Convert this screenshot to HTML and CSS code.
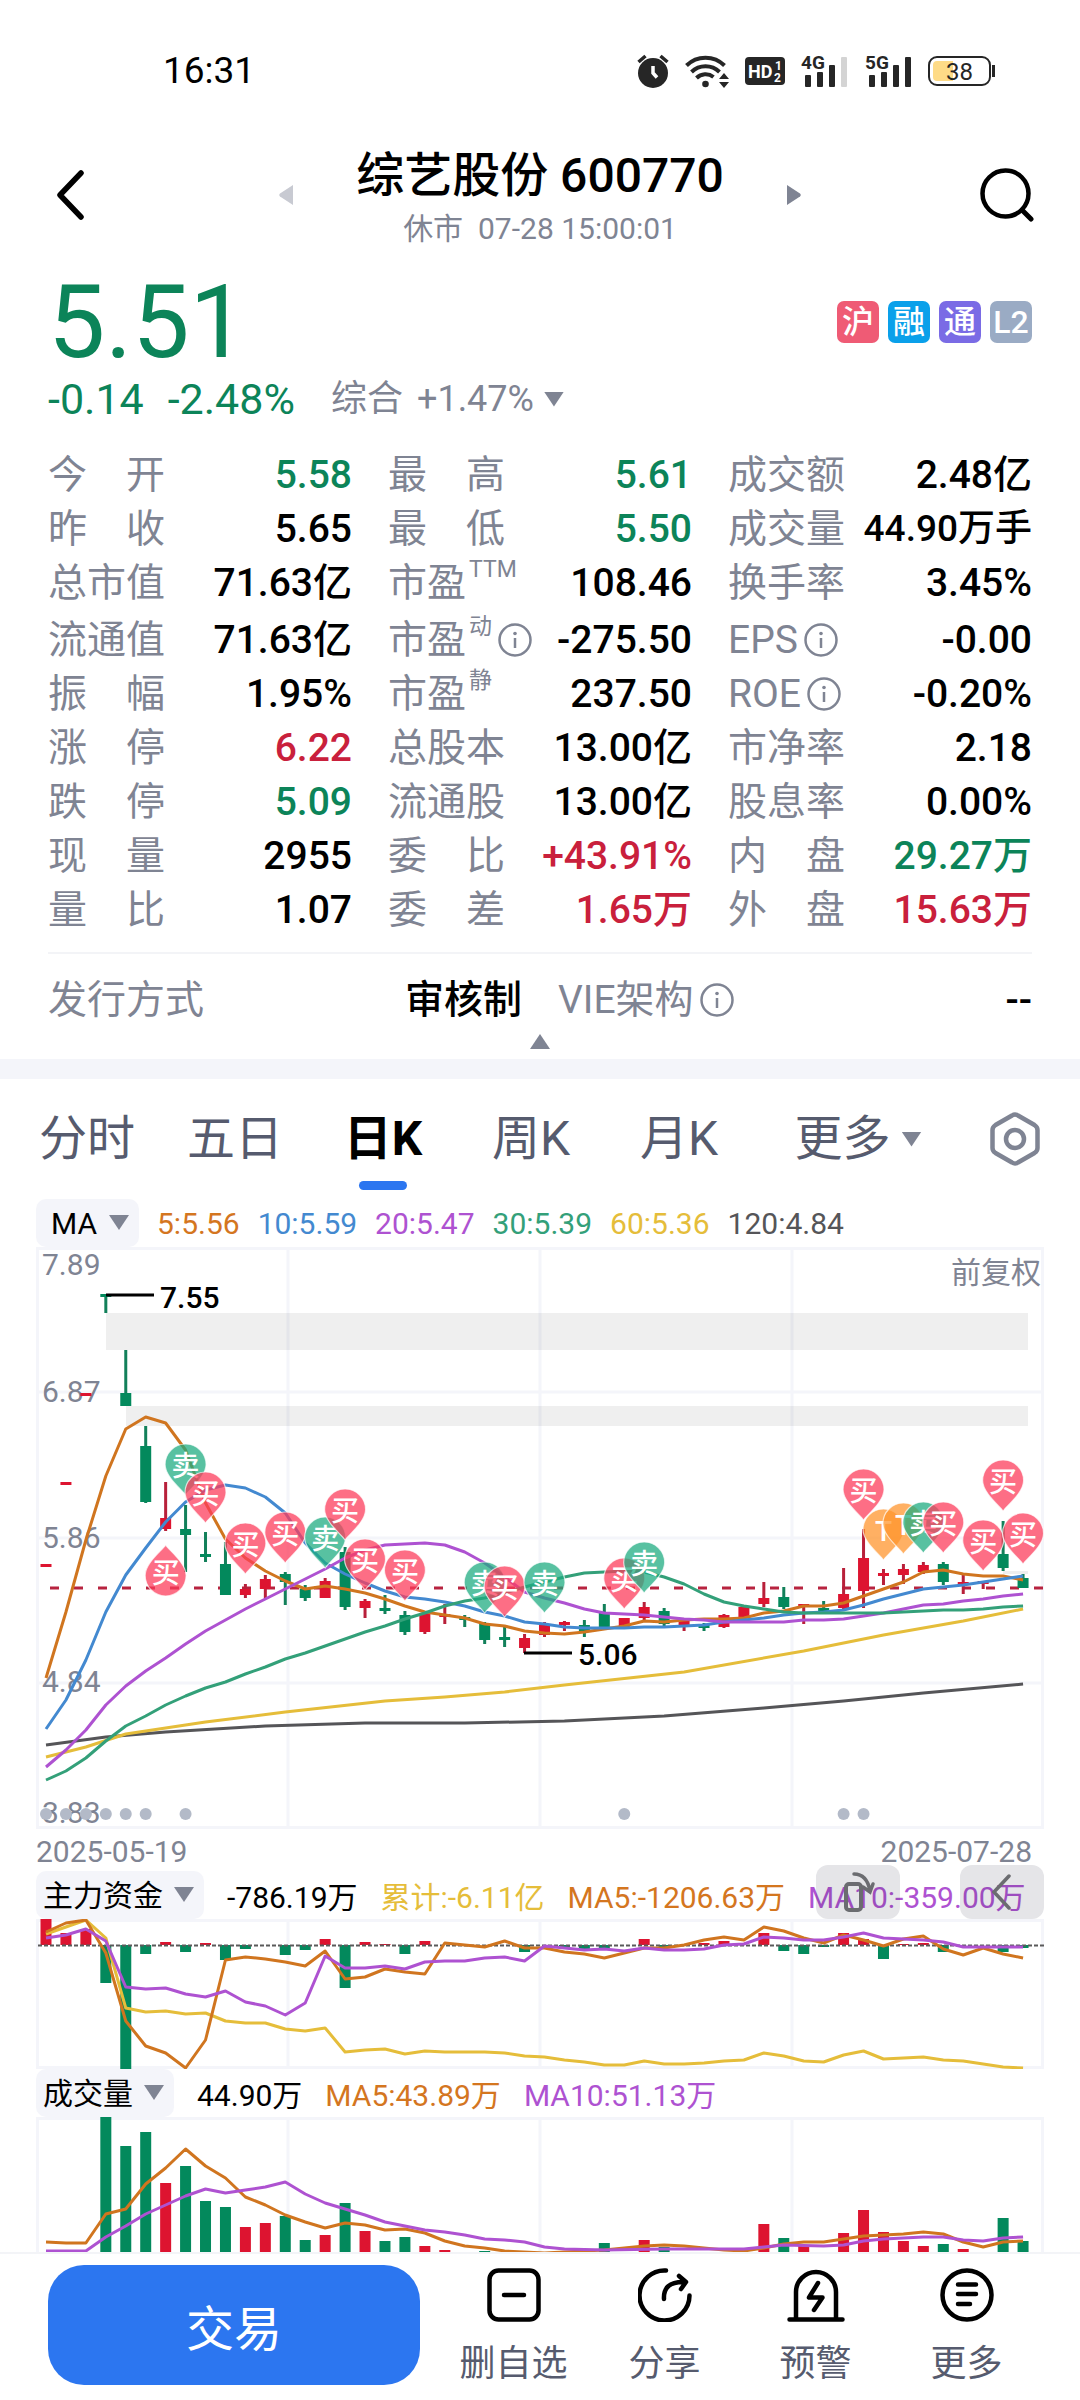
FILE: index.html
```html
<!DOCTYPE html>
<html lang="zh-CN">
<head>
<meta charset="utf-8">
<meta name="viewport" content="width=device-width, initial-scale=1">
<title>综艺股份 600770</title>
<link rel="stylesheet" href="styles.css">
</head>
<body>
<div class="status">
  <span class="status-time">16:31</span>
  <div class="status-icons">
    <svg width="32" height="34" viewBox="0 0 32 34"><circle cx="16" cy="19" r="15" fill="#262626"/><path d="M1.500 8l7-6M30.500 8l-7-6" stroke="#262626" stroke-width="3.500" fill="none"/><path d="M16 12v7l4 4.500" stroke="#fff" stroke-width="3.500" fill="none"/></svg>
    <svg width="44" height="34" viewBox="0 0 44 34"><g fill="none" stroke="#262626" stroke-width="4"><path d="M1.500 11.500a27 27 0 0 1 38 0"/><path d="M6.500 18a20 20 0 0 1 28 0"/><path d="M11.500 24a13 13 0 0 1 17-1"/></g><circle cx="20.500" cy="30" r="3.300" fill="#262626"/><path d="M34 25l5-6 5 6zM34 28l5 6 5-6z" fill="#262626"/></svg>
    <svg width="40" height="28" viewBox="0 0 40 28"><rect width="40" height="28" rx="4" fill="#262626"/><g fill="#fff" font-weight="700"><text x="3" y="21" font-size="18">HD</text><text x="30" y="13" font-size="12">1</text><text x="29" y="25" font-size="12">2</text></g></svg>
    <svg width="48" height="42" viewBox="0 -4 48 42"><text x="0" y="15" font-size="19" font-weight="700" fill="#262626">4G</text><g fill="#262626"><rect x="4" y="21" width="6" height="12" rx="1"/><rect x="16" y="18" width="6" height="15" rx="1"/><rect x="28" y="11" width="6" height="22" rx="1"/></g><rect x="40" y="3" width="6" height="30" rx="1" fill="#d4d4d4"/></svg>
    <svg width="47" height="42" viewBox="0 -4 47 42"><text x="0" y="15" font-size="19" font-weight="700" fill="#262626">5G</text><g fill="#262626"><rect x="4" y="21" width="6" height="12" rx="1"/><rect x="16" y="18" width="6" height="15" rx="1"/><rect x="28" y="11" width="6" height="22" rx="1"/><rect x="40" y="3" width="6" height="30" rx="1"/></g></svg>
    <svg width="67" height="30" viewBox="0 0 67 30"><rect x="1" y="1" width="61" height="28" rx="8" fill="#fff" stroke="#262626" stroke-width="2"/><path d="M9 5h16v20H9a4 4 0 0 1-4-4V9a4 4 0 0 1 4-4z" fill="#fedb87"/><path d="M65.500 9v12" stroke="#262626" stroke-width="3"/><text x="31.500" y="24" font-size="24" text-anchor="middle" fill="#262626">38</text></svg>
  </div>
</div>

<header class="head">
  <button class="icon-btn back" aria-label="返回"><svg width="28" height="50" viewBox="0 0 28 50"><path d="M25 3L4 25l21 22" fill="none" stroke="#000" stroke-width="5.500" stroke-linecap="round" stroke-linejoin="round"/></svg></button>
  <div class="head-mid">
    <button class="icon-btn" aria-label="上一只"><svg width="14" height="20" viewBox="0 0 14 20"><path d="M14 0v20L1 11.500q-1.500-1.500 0-3z" fill="#c8cad2"/></svg></button>
    <div class="head-title">
      <h1>综艺股份 600770</h1>
      <p>休市&nbsp; 07-28 15:00:01</p>
    </div>
    <button class="icon-btn" aria-label="下一只"><svg width="14" height="20" viewBox="0 0 14 20"><path d="M0 0v20l13-8.500q1.500-1.500 0-3z" fill="#7f8493"/></svg></button>
  </div>
  <button class="icon-btn search" aria-label="搜索"><svg width="54" height="54" viewBox="0 0 54 54"><circle cx="25.500" cy="25.500" r="23" fill="none" stroke="#000" stroke-width="4.500"/><path d="M42 42l9 9" stroke="#000" stroke-width="5" stroke-linecap="round"/></svg></button>
</header>

<section class="price">
  <div class="price-top">
    <strong class="price-now down">5.51</strong>
    <ul class="badges">
      <li class="b-sh">沪</li><li class="b-rong">融</li><li class="b-tong">通</li><li class="b-l2">L2</li>
    </ul>
  </div>
  <div class="price-sub">
    <span class="chg down">-0.14</span><span class="chg down">-2.48%</span>
    <button class="sector">综合 <span>+1.47%</span><i class="tri"></i></button>
  </div>
</section>

<dl class="quotes">
  <div><dt class="spread">今 开</dt><dd class="down">5.58</dd></div>
  <div><dt class="spread">最 高</dt><dd class="down">5.61</dd></div>
  <div><dt>成交额</dt><dd>2.48亿</dd></div>
  <div><dt class="spread">昨 收</dt><dd>5.65</dd></div>
  <div><dt class="spread">最 低</dt><dd class="down">5.50</dd></div>
  <div><dt>成交量</dt><dd class="long">44.90万手</dd></div>
  <div><dt>总市值</dt><dd>71.63亿</dd></div>
  <div><dt>市盈<small>TTM</small></dt><dd>108.46</dd></div>
  <div><dt>换手率</dt><dd>3.45%</dd></div>
  <div class="tall"><dt>流通值</dt><dd>71.63亿</dd></div>
  <div class="tall"><dt>市盈<small>动</small><svg class="info" viewBox="0 0 34 34"><use href="#info"/></svg></dt><dd>-275.50</dd></div>
  <div class="tall"><dt>EPS<svg class="info" viewBox="0 0 34 34"><use href="#info"/></svg></dt><dd>-0.00</dd></div>
  <div><dt class="spread">振 幅</dt><dd>1.95%</dd></div>
  <div><dt>市盈<small>静</small></dt><dd>237.50</dd></div>
  <div><dt>ROE<svg class="info" viewBox="0 0 34 34"><use href="#info"/></svg></dt><dd>-0.20%</dd></div>
  <div><dt class="spread">涨 停</dt><dd class="up">6.22</dd></div>
  <div><dt>总股本</dt><dd>13.00亿</dd></div>
  <div><dt>市净率</dt><dd>2.18</dd></div>
  <div><dt class="spread">跌 停</dt><dd class="down">5.09</dd></div>
  <div><dt>流通股</dt><dd>13.00亿</dd></div>
  <div><dt>股息率</dt><dd>0.00%</dd></div>
  <div><dt class="spread">现 量</dt><dd>2955</dd></div>
  <div><dt class="spread">委 比</dt><dd class="up">+43.91%</dd></div>
  <div><dt class="spread">内 盘</dt><dd class="down">29.27万</dd></div>
  <div><dt class="spread">量 比</dt><dd>1.07</dd></div>
  <div><dt class="spread">委 差</dt><dd class="up">1.65万</dd></div>
  <div><dt class="spread">外 盘</dt><dd class="up">15.63万</dd></div>
</dl>
<dl class="quotes extra">
  <div><dt>发行方式</dt><dd>审核制</dd></div>
  <div><dt>VIE架构<svg class="info" viewBox="0 0 34 34"><use href="#info"/></svg></dt><dd>--</dd></div>
</dl>
<button class="fold" aria-label="收起"><i class="tri tri-up"></i></button>

<nav class="tabs">
  <button>分时</button>
  <button>五日</button>
  <button class="active">日K</button>
  <button>周K</button>
  <button>月K</button>
  <button>更多<i class="tri"></i></button>
  <button aria-label="设置"><svg width="50" height="54" viewBox="0 0 50 54"><path d="M22 3.500q3-2 6 0l16.500 9.500q3 2 3 5v18q0 3-3 5L28 50.500q-3 2-6 0L5.500 41q-3-2-3-5V18q0-3 3-5z" fill="none" stroke="#7f8493" stroke-width="4.500"/><circle cx="25" cy="27" r="9" fill="none" stroke="#7f8493" stroke-width="4.500"/></svg></button>
</nav>

<main class="charts">
  <div class="legend">
    <label class="pick pick-ma"><select aria-label="主图指标"><option>MA</option></select><i class="tri"></i></label>
    <span class="c5">5:5.56</span><span class="c10">10:5.59</span><span class="c20">20:5.47</span><span class="c30">30:5.39</span><span class="c60">60:5.36</span><span class="c120">120:4.84</span>
  </div>
  <svg class="plot" id="kline" viewBox="0 0 1008 582" role="img" aria-label="日K线"></svg>
  <div class="dates"><time>2025-05-19</time><time>2025-07-28</time></div>

  <div class="legend wide">
    <label class="pick"><select aria-label="副图指标一"><option>主力资金</option></select><i class="tri"></i></label>
    <span>-786.19万</span><span class="c60">累计:-6.11亿</span><span class="c5">MA5:-1206.63万</span><span class="c20">MA10:-359.00万</span>
    <button class="float float-rotate" aria-label="横屏"><svg width="36" height="42" viewBox="0 0 36 42"><rect x="6" y="13" width="15" height="26" rx="3" fill="none" stroke="#6b6c70" stroke-width="4"/><path d="M14 3q13 0 16 17M23 16l7 5 3-8" fill="none" stroke="#6b6c70" stroke-width="3.500" stroke-linecap="round"/></svg></button>
    <button class="float float-back" aria-label="收起侧栏"><svg width="20" height="36" viewBox="0 0 20 36"><path d="M17 2L2 18l15 16" fill="none" stroke="#6b6c70" stroke-width="3.500" stroke-linecap="round"/></svg></button>
  </div>
  <svg class="plot" id="fund" viewBox="0 0 1008 150" role="img" aria-label="主力资金"></svg>

  <div class="legend wide">
    <label class="pick"><select aria-label="副图指标二"><option>成交量</option></select><i class="tri"></i></label>
    <span>44.90万</span><span class="c5">MA5:43.89万</span><span class="c20">MA10:51.13万</span>
  </div>
  <svg class="plot" id="volume" viewBox="0 0 1008 135" role="img" aria-label="成交量"></svg>
</main>

<footer class="bar">
  <button class="trade">交易</button>
  <div class="actions">
    <button><svg viewBox="0 0 54 54"><rect x="2.500" y="2.500" width="49" height="49" rx="9"/><path d="M17 27h20"/></svg>删自选</button>
    <button><svg viewBox="0 0 54 54"><path d="M28 2.500a25 25 0 1 0 23.500 25M26 31q-1-17 19-17M41 8l7 6-5 7"/></svg>分享</button>
    <button><svg viewBox="0 0 58 54"><path d="M2.500 51.500h53M9 51V24a20 20 0 0 1 40 0v27M31 15L22 29.500h13.500L27 42"/></svg>预警</button>
    <button><svg viewBox="0 0 54 54"><circle cx="27" cy="27" r="24.500"/><path d="M18 16.500h18M18 26h18M18 36h12"/></svg>更多</button>
  </div>
</footer>

<svg class="defs" width="0" height="0" aria-hidden="true">
  <symbol id="info" viewBox="0 0 34 34"><circle cx="17" cy="17" r="15.500" fill="none" stroke="#7f8493" stroke-width="2.500"/><circle cx="17" cy="10.500" r="1.800" fill="#7f8493"/><path d="M17 15v10" stroke="#7f8493" stroke-width="2.500"/></symbol>
</svg>
<script src="chart.js"></script>
</body>
</html>
```
FILE: styles.css
```css
:root {
  --grey: #7f8493;
  --slate: #565b6e;
  --panel: #f4f5fa;
  --red: #c9203c;
  --green: #0c8459;
  --blue: #2c76f0;
}
* { box-sizing: border-box; }
body {
  margin: 0;
  background: #fff;
  color: #000;
  font-family: Roboto, "Noto Sans CJK SC", sans-serif;
  font-size: 30px;
}
h1, p, ul, dl, dd { margin: 0; padding: 0; }
button, select {
  font: inherit;
  color: inherit;
  background: none;
  border: 0;
  padding: 0;
  margin: 0;
}
svg { display: block; }
.defs { position: absolute; }
.up { color: var(--red); }
.down { color: var(--green); }

.tri {
  display: inline-block;
  width: 20px;
  height: 15px;
  background: var(--grey);
  clip-path: polygon(0 0, 100% 0, 50% 100%);
}
.tri-up { clip-path: polygon(50% 0, 100% 100%, 0 100%); }

.status {
  display: flex;
  justify-content: space-between;
  align-items: center;
  padding: 47px 85px 0 163px;
  line-height: 47px;
}
.status-time { font-size: 37px; }
.status-icons { display: flex; align-items: center; gap: 16px; }

.head {
  display: grid;
  grid-template-columns: 1fr auto 1fr;
  align-items: center;
  padding: 54px 46px 0 56px;
}
.icon-btn { display: flex; margin-bottom: 7px; }
.search { justify-self: end; }
.back { justify-self: start; }
.head-mid { display: flex; align-items: center; gap: 63px; margin-right: 10px; }
.head-title { text-align: center; }
.head-title h1 { font-size: 48px; font-weight: 500; line-height: 56px; }
.head-title p { margin-top: 5px; line-height: 40px; color: var(--grey); }

.price { padding: 23px 48px 0; }
.price-top { display: flex; justify-content: space-between; align-items: center; }
.price-now { font-size: 102px; font-weight: 400; line-height: 100px; }
.badges { display: flex; gap: 9px; list-style: none; }
.badges li {
  width: 42px;
  height: 42px;
  border-radius: 7px;
  color: #fff;
  font-size: 32px;
  font-weight: 500;
  line-height: 42px;
  text-align: center;
}
.b-sh { background: #ef5b75; }
.b-rong { background: #0aa0ea; }
.b-tong { background: #7a6be5; }
.b-l2 { background: #9aabc4; }
.price-sub { display: flex; align-items: center; line-height: 54px; }
.chg { font-size: 43px; margin-right: 24px; }
.sector { display: flex; align-items: center; gap: 14px; margin-left: 12px; font-size: 36px; color: var(--grey); }
.sector .tri { margin-left: -4px; }

.quotes {
  display: grid;
  grid-template-columns: repeat(3, 1fr);
  column-gap: 36px;
  margin: 0 48px;
  padding-top: 22px;
  font-size: 39px;
  line-height: 54px;
}
.quotes > div { display: flex; justify-content: space-between; height: 54px; white-space: nowrap; }
.quotes > .tall { height: 57px; padding-top: 3px; }
.quotes dt { display: flex; color: var(--grey); }
.quotes dt.spread { display: block; width: 3em; text-align-last: justify; }
.quotes dd { font-weight: 500; }
.quotes dd.long { font-size: 37px; }
.quotes small { margin-left: 3px; font-size: 23px; line-height: 28px; }
.info { width: 34px; height: 34px; margin: 10px 0 0 6px; }
.extra {
  grid-template-columns: repeat(2, 1fr);
  margin-top: 15px;
  padding-top: 19px;
  border-top: 2px solid #f3f4f7;
}
.fold {
  display: flex;
  justify-content: center;
  width: 100%;
  padding: 7px 0 10px;
  border-bottom: 20px solid var(--panel);
}

.tabs {
  display: grid;
  grid-template-columns: repeat(5, 148fr) 210fr 104fr;
  padding: 0 13px;
  height: 120px;
}
.tabs button {
  position: relative;
  display: flex;
  align-items: center;
  justify-content: center;
  gap: 11px;
  font-size: 48px;
  line-height: 116px;
  color: var(--slate);
}
.tabs .active { color: #000; font-weight: 700; }
.tabs .active::after {
  content: "";
  position: absolute;
  left: 50%;
  bottom: 9px;
  width: 48px;
  height: 9px;
  margin-left: -24px;
  border-radius: 5px;
  background: var(--blue);
}

.charts { padding: 0 36px; }
.plot { width: 100%; height: auto; }
.plot text { font-size: 30px; }
.legend {
  position: relative;
  display: flex;
  align-items: center;
  gap: 18px;
  height: 48px;
  white-space: nowrap;
}
.legend.wide { gap: 23px; }
.pick { position: relative; height: 48px; }
.pick select {
  appearance: none;
  height: 48px;
  padding: 0 41px 0 7px;
  border-radius: 10px;
  background: var(--panel);
}
.pick-ma select { padding-left: 15px; }
.pick .tri { position: absolute; right: 10px; top: 16px; pointer-events: none; }
.c5 { color: #d4761f; }
.c10 { color: #4389d0; }
.c20 { color: #ae52d1; }
.c30 { color: #33a079; }
.c60 { color: #e5bd3a; }
.c120 { color: #555558; }
.dates {
  display: flex;
  justify-content: space-between;
  height: 42px;
  padding: 2px 12px 0 0;
  line-height: 42px;
  color: var(--grey);
}
.float {
  position: absolute;
  top: -6px;
  display: flex;
  align-items: center;
  justify-content: center;
  width: 84px;
  height: 54px;
  border-radius: 12px;
  background: rgba(40, 45, 65, .12);
}
.float-rotate { right: 144px; }
.float-back { right: 0; }

.bar {
  position: sticky;
  bottom: 0;
  display: flex;
  align-items: flex-start;
  height: 147px;
  padding: 11px 38px 0 48px;
  border-top: 2px solid #f3f4f7;
  background: #fff;
}
.trade {
  width: 372px;
  height: 120px;
  margin-right: 18px;
  border-radius: 36px;
  background: var(--blue);
  color: #fff;
  font-size: 48px;
}
.actions { flex: 1; display: grid; grid-template-columns: repeat(4, 1fr); }
.actions button {
  display: flex;
  flex-direction: column;
  align-items: center;
  gap: 20px;
  padding-top: 3px;
  font-size: 36px;
  line-height: 44px;
  color: var(--slate);
}
.actions svg {
  height: 54px;
  fill: none;
  stroke: #000;
  stroke-width: 4.5;
  stroke-linecap: round;
  stroke-linejoin: round;
}
```
FILE: chart.js
```js
const NS = 'http://www.w3.org/2000/svg';
const STEP = 19.94;
const RED = '#dd1430';
const GREEN = '#03895c';
const GREY = '#7f8493';
const COLORS = { ma5: '#d0751f', ma10: '#4389d0', ma20: '#ae52d1', ma30: '#33a079', ma60: '#e5bd3a', ma120: '#555558' };

const cx = i => 10 + STEP * i;

function add(parent, tag, attrs, text) {
  const el = document.createElementNS(NS, tag);
  for (const k in attrs) el.setAttribute(k, attrs[k]);
  if (text) el.textContent = text;
  parent.appendChild(el);
  return el;
}

function grid(svg, height, rows, open) {
  const d = [];
  [252, 504, 756].forEach(x => d.push(`M${x} 0V${height}`));
  rows.forEach(y => d.push(`M0 ${y}H1008`));
  d.push(open ? `M1.5 ${height}V1.5H1006.5V${height}` : `M1.5 1.5H1006.5V${height - 1.5}H1.5z`);
  add(svg, 'path', { d: d.join(''), fill: 'none', stroke: '#f4f5fa', 'stroke-width': 3 });
}

// values: one y per day, or [day, y] pairs where a line is sampled sparsely
function line(svg, values, color) {
  const pts = values.map((v, i) => Array.isArray(v) ? `${cx(v[0])},${v[1]}` : `${cx(i)},${v}`);
  add(svg, 'polyline', { points: pts.join(' '), fill: 'none', stroke: color, 'stroke-width': 3, 'stroke-linejoin': 'round' });
}

/* ---------- daily candles: [rising, high, bodyTop, bodyBottom, low] ---------- */
const candles = [
  [1,317,317,320,320],[1,235,235,238,238],[1,146,146,149,149],[0,47,47,50,66],[0,103,146,159,159],
  [0,179,199,255,256],[1,235,271,282,284],[0,258,282,288,325],[0,285,307,310,315],[0,295,317,348,348],
  [1,337,342,348,351],[1,328,332,342,351],[0,325,327,335,358],[0,338,342,351,354],[1,331,334,351,351],
  [0,300,305,360,363],[1,352,354,361,371],[0,348,361,364,367],[0,364,368,385,388],[1,366,366,385,387],
  [1,357,367,370,377],[0,368,370,373,380],[0,375,377,393,397],[0,379,390,393,400],[1,387,391,401,406],
  [1,375,378,388,390],[1,374,375,378,384],[0,373,378,384,390],[0,357,365,380,380],[1,371,371,380,382],
  [1,355,360,371,373],[0,361,364,377,379],[1,372,373,380,384],[0,376,378,381,384],[1,367,368,380,381],
  [1,360,360,371,371],[1,335,351,357,360],[0,340,350,360,362],[1,357,357,360,377],[0,354,361,364,364],
  [1,321,347,361,362],[1,282,311,344,361],[1,322,326,329,338],[1,317,322,328,337],[1,315,318,325,327],
  [0,315,317,335,338],[1,328,335,338,347],[1,334,334,337,342],[0,274,307,321,324],[0,327,331,341,341]
];
const ma = {
  ma120: [[0,498],[3,490],[6,485],[11,479],[16,476],[21,476],[26,474],[31,469],[36,461],[40,454],[44,446],[49,437]],
  ma60: [[0,510],[2,500],[4,487],[8,475],[12,465],[17,454],[20,450],[23,445],[26,438],[32,425],[38,404],[42,388],[46,374],[49,362]],
  ma5: [431,365,293,229,182,170,176,203,256,292,311,324,334,342,339,342,346,352,359,365,368,371,377,379,384,386,387,385,382,379,374,375,373,372,372,371,366,364,359,359,356,349,342,335,325,323,327,329,329,333],
  ma10: [482,453,413,365,328,301,275,255,243,238,241,250,266,296,316,327,336,344,350,352,355,359,365,369,375,377,380,381,381,381,380,380,379,378,375,373,371,368,366,365,363,358,352,347,342,340,338,335,332,329],
  ma20: [520,503,483,458,439,424,411,397,384,373,362,352,342,332,322,311,303,298,297,296,298,305,316,330,345,351,356,362,366,367,368,370,372,373,375,375,375,375,373,373,372,369,366,362,358,357,354,352,349,347],
  ma30: [533,524,511,494,479,469,458,449,441,435,427,420,412,406,399,392,385,379,372,366,359,354,351,346,340,335,330,326,325,324,325,330,337,347,355,359,362,365,366,366,366,366,366,365,364,363,363,362,360,359]
};
// [day, kind, top, pointsUp]
const pins = [
  [7,'卖',197],[8,'买',225],[6,'买',298,1],[10,'买',276],[12,'买',265],[14,'卖',270],[15,'买',242],
  [16,'买',292],[18,'买',303],[22,'卖',315],[23,'买',319],[25,'卖',315],[29,'买',311],[30,'卖',295],
  [41,'买',222],[42,'T',262],[43,'T',256],[44,'卖',255],[45,'买',255],[47,'买',273],[48,'买',213],[49,'买',266]
];
const PIN_FILL = { '买': 'rgba(252,60,90,.74)', '卖': 'rgba(30,171,128,.74)', 'T': 'rgba(255,148,45,.74)' };

function drawKline() {
  const svg = document.getElementById('kline');
  grid(svg, 582, [145, 291, 436]);
  [[6,28,'7.89'],[6,155,'6.87'],[6,301,'5.86'],[6,445,'4.84'],[6,576,'3.83']].forEach(([x, y, t]) =>
    add(svg, 'text', { x, y, fill: GREY }, t));
  add(svg, 'text', { x: 1005, y: 36, fill: GREY, 'text-anchor': 'end' }, '前复权');

  [[70,66,37],[90,159,20]].forEach(([x, y, h]) =>
    add(svg, 'rect', { x, y, width: 992 - x, height: h, fill: 'rgba(0,0,0,.062)' }));
  add(svg, 'rect', { x: 967, y: 324, width: 25, height: 3, fill: '#eeeeee' });
  add(svg, 'path', { d: 'M14 341H1008', stroke: '#b7233f', 'stroke-width': 3, 'stroke-dasharray': '9 15' });

  candles.forEach(([up, hi, top, bottom, low], i) => {
    const fill = up ? RED : GREEN;
    add(svg, 'rect', { x: cx(i) - 1.5, y: hi, width: 3, height: low - hi, fill: up ? '#b8203a' : '#12805a' });
    add(svg, 'rect', { x: cx(i) - 5.5, y: top, width: 11, height: bottom - top, fill });
  });
  for (const key in ma) line(svg, ma[key], COLORS[key]);

  add(svg, 'path', { d: 'M70 48H118M488 406H536', stroke: '#000', 'stroke-width': 3 });
  add(svg, 'text', { x: 124, y: 61, 'font-weight': 500 }, '7.55');
  add(svg, 'text', { x: 542, y: 418, 'font-weight': 500 }, '5.06');

  [0,1,2,3,4,5,7,29,40,41].forEach(i => add(svg, 'circle', { cx: cx(i), cy: 567, r: 6, fill: '#b3bac8' }));

  pins.forEach(([i, kind, top, flip]) => {
    const g = add(svg, 'g', { transform: `translate(${cx(i)} ${top})` });
    add(g, 'path', {
      d: 'M0 51C-3 46-20.500 33-20.500 20.500A20.500 20.500 0 0 1 20.500 20.500C20.500 33 3 46 0 51z',
      fill: PIN_FILL[kind], stroke: 'rgba(255,255,255,.7)', 'stroke-width': 1.2,
      ...(flip ? { transform: 'rotate(180 0 25.500)' } : {})
    });
    add(g, 'text', { x: 0, y: flip ? 38 : 32, fill: '#fff', 'font-weight': 500, 'text-anchor': 'middle', style: 'font-size:28px' }, kind);
  });
}

/* ---------- main-force fund flow: [day, edge] measured from the zero line ---------- */
const ZERO = 26;
const flows = [
  [0,0],[1,14],[2,10],[3,64],[4,150],[5,35],[6,23],[7,33],[8,24],[9,41],[10,30],[12,36],[13,31],[14,20],[15,69],
  [16,23],[17,25],[18,35],[19,22],[24,33],[26,30],[27,30],[28,30],[30,20],[31,28],[33,24],[34,22],[36,14],[37,32],
  [38,35],[39,28],[40,14],[41,20],[42,40],[43,25],[44,24],[45,33],[48,33],[49,29]
];
const fund = {
  ma60: [15,8,1,19,89,93,92,95,94,102,104,104,110,112,109,133,131,130,135,132,133,133,133,134,137,138,141,143,146,146,142,145,145,144,142,141,134,137,142,143,136,132,140,139,138,141,142,145,148,149],
  ma5: [13,4,1,34,102,127,134,149,121,41,38,40,43,47,32,60,58,50,53,55,24,26,28,22,29,29,33,35,39,34,29,29,26,21,18,21,8,12,19,24,16,21,27,20,17,30,36,29,35,39],
  ma20: [19,16,10,22,68,70,69,75,78,72,83,87,96,84,37,49,49,47,50,43,42,42,39,38,42,27,29,31,30,32,29,31,31,30,26,25,18,19,21,21,18,14,19,20,21,23,28,28,28,28]
};

function drawFund() {
  const svg = document.getElementById('fund');
  grid(svg, 150, []);
  flows.forEach(([i, y]) => add(svg, 'rect', {
    x: cx(i) - 5.5, y: Math.min(y, ZERO), width: 11, height: Math.abs(y - ZERO), fill: y < ZERO ? RED : GREEN
  }));
  add(svg, 'path', { d: 'M2 26.500H1008', stroke: '#5a5a5a', 'stroke-width': 2, 'stroke-dasharray': '4 2' });
  for (const key in fund) line(svg, fund[key], COLORS[key]);
}

/* ---------- volume: [day, top, rising] ---------- */
const volumes = [
  [3,0,0],[4,29,0],[5,15,0],[6,66,1],[7,49,0],[8,84,0],[9,90,0],[10,110,1],[11,106,1],[12,99,0],[13,123,0],[14,118,1],
  [15,86,0],[16,114,1],[17,124,0],[18,120,0],[19,129,1],[20,133,1],[22,134,0],[28,126,0],[30,123,1],[31,130,0],
  [36,107,1],[37,121,0],[38,128,1],[40,116,1],[41,93,1],[42,115,1],[43,124,1],[44,129,1],[45,127,0],[46,132,1],[48,101,0],[49,124,0]
];
const volMa = {
  ma5: [[0,125],[1,126],[2,126],[3,97],[4,92],[5,67],[6,51],[7,32],[8,49],[9,61],[10,80],[11,88],[12,98],[13,105],[14,111],[15,106],[16,108],[17,113],[18,112],[19,116],[20,124],[21,129],[22,131],[23,134],[25,136],[28,133],[29,131],[30,129],[31,128],[32,129],[33,131],[34,133],[35,134],[36,131],[37,127],[38,125],[39,125],[40,122],[41,119],[42,118],[43,117],[44,115],[45,117],[46,125],[47,130],[48,125],[49,124]],
  ma20: [[0,134],[2,134],[3,120],[4,109],[5,97],[6,88],[7,79],[8,72],[9,76],[10,73],[11,70],[12,65],[13,77],[14,86],[15,92],[16,98],[17,105],[18,109],[19,113],[20,115],[21,118],[22,122],[23,123],[24,125],[25,130],[26,132],[28,133],[31,132],[35,132],[36,130],[37,128],[39,129],[40,128],[41,124],[42,122],[44,120],[45,120],[46,123],[47,124],[48,121],[49,120]]
};

function drawVolume() {
  const svg = document.getElementById('volume');
  grid(svg, 135, [], true);
  volumes.forEach(([i, top, up]) => add(svg, 'rect', {
    x: cx(i) - 5.5, y: top, width: 11, height: 135 - top, fill: up ? RED : GREEN
  }));
  for (const key in volMa) line(svg, volMa[key], COLORS[key]);
}

drawKline();
drawFund();
drawVolume();
```
